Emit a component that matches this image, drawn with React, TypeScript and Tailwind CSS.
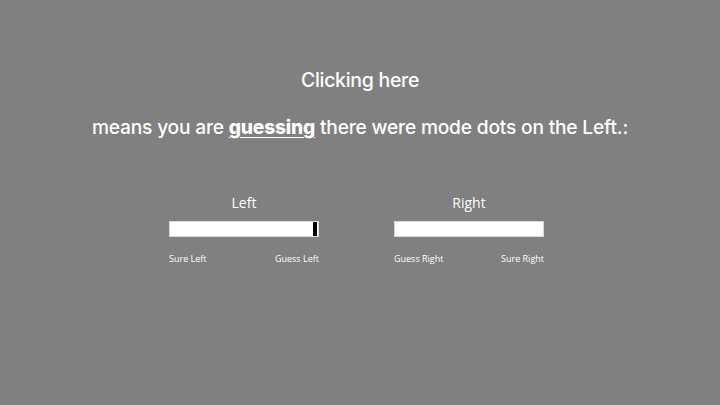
export default function App() {
  return (
    <div className="w-[720px] h-[405px] bg-[#808080] text-white flex flex-col items-center pt-[68px]" style={{ fontFamily: "Inter, 'Open Sans', sans-serif" }}>
      <div className="text-[19.5px] leading-[24px] font-medium tracking-[-0.3px]">Clicking here</div>
      <div className="mt-[23px] text-[19.2px] leading-[24px] font-medium tracking-[-0.2px]">
        means you are <span className="font-extrabold underline underline-offset-[3px]">guessing</span> there were mode dots on the Left.:
      </div>
      <div className="mt-[54px] flex gap-[75px] mr-[7px]" style={{ fontFamily: "'Open Sans', sans-serif" }}>
        <div className="w-[150px] flex flex-col">
          <div className="text-center text-[14px] leading-[20px]">Left</div>
          <div className="mt-[8px] h-[16px] bg-white border border-[#d9d9d9] flex justify-end pr-[1px]">
            <div className="w-[4px] h-full bg-black" />
          </div>
          <div className="mt-[16px] flex justify-between text-[9px] leading-[12px]">
            <span>Sure Left</span>
            <span>Guess Left</span>
          </div>
        </div>
        <div className="w-[150px] flex flex-col">
          <div className="text-center text-[14px] leading-[20px]">Right</div>
          <div className="mt-[8px] h-[16px] bg-white border border-[#d9d9d9]" />
          <div className="mt-[16px] flex justify-between text-[9px] leading-[12px]">
            <span>Guess Right</span>
            <span>Sure Right</span>
          </div>
        </div>
      </div>
    </div>
  );
}
